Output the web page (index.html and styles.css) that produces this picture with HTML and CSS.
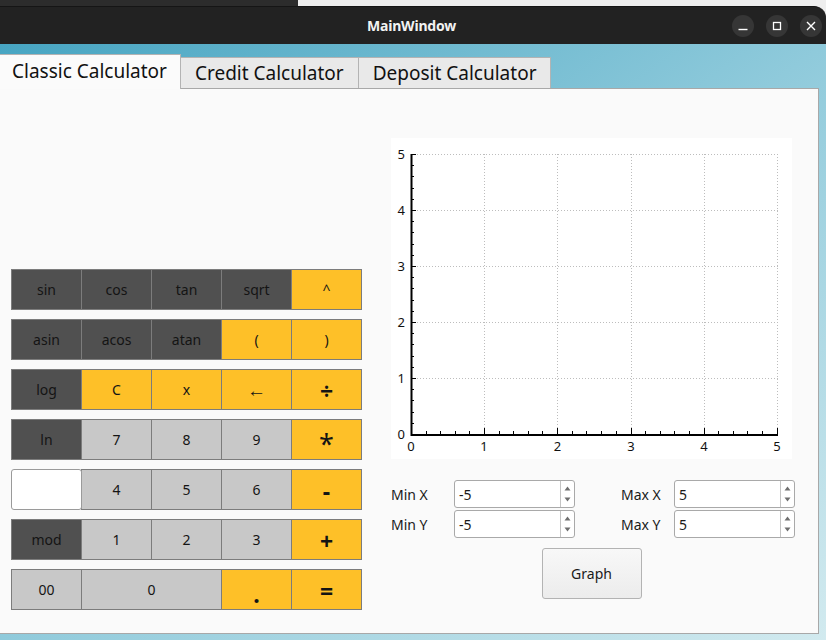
FILE: index.html
```html
<!DOCTYPE html>
<html>
<head>
<meta charset="utf-8">
<link rel="stylesheet" href="styles.css">
</head>
<body>
<div class="screen">
  <div class="topbar">
    <div class="titlebar">
      <span></span>
      <span class="title">MainWindow</span>
      <div class="wm">
        <span class="wm-btn"><svg width="22" height="22" viewBox="0 0 22 22"><path d="M6.5 14.5h9" stroke="#fff" stroke-width="1.4"/></svg></span>
        <span class="wm-btn"><svg width="22" height="22" viewBox="0 0 22 22"><rect x="7.5" y="7.5" width="7" height="7" fill="none" stroke="#fff" stroke-width="1.3"/></svg></span>
        <span class="wm-btn"><svg width="22" height="22" viewBox="0 0 22 22"><path d="M7 7l8 8M15 7l-8 8" stroke="#fff" stroke-width="1.4"/></svg></span>
      </div>
    </div>
  </div>
  <div class="desktop">
    <div class="tabs">
      <div class="tab active">Classic Calculator</div>
      <div class="tab">Credit Calculator</div>
      <div class="tab">Deposit Calculator</div>
    </div>
    <div class="pane">
      <div class="keypad">
        <div class="krow">
          <div class="key dark">sin</div><div class="key dark">cos</div><div class="key dark">tan</div><div class="key dark">sqrt</div><div class="key yellow">^</div>
        </div>
        <div class="krow">
          <div class="key dark">asin</div><div class="key dark">acos</div><div class="key dark">atan</div><div class="key yellow">(</div><div class="key yellow">)</div>
        </div>
        <div class="krow">
          <div class="key dark">log</div><div class="key yellow">C</div><div class="key yellow">x</div><div class="key yellow arrow">←</div><div class="key yellow big">÷</div>
        </div>
        <div class="krow">
          <div class="key dark">ln</div><div class="key light">7</div><div class="key light">8</div><div class="key light">9</div><div class="key yellow big star">*</div>
        </div>
        <div class="krow">
          <div class="key field"></div><div class="key light">4</div><div class="key light">5</div><div class="key light">6</div><div class="key yellow big">-</div>
        </div>
        <div class="krow">
          <div class="key dark">mod</div><div class="key light">1</div><div class="key light">2</div><div class="key light">3</div><div class="key yellow big">+</div>
        </div>
        <div class="krow">
          <div class="key light">00</div><div class="key light wide">0</div><div class="key yellow big dot">.</div><div class="key yellow big">=</div>
        </div>
      </div>
      <div class="side">
        <svg class="plot" width="401" height="321" viewBox="0 0 401 321">
          <rect width="401" height="321" fill="#fff"/>
          <g stroke="#bdbdbd" stroke-width="1" stroke-dasharray="1 2" fill="none">
            <path d="M93.5 16V296M166.5 16V296M240.5 16V296M313.5 16V296M386.5 16V296"/>
            <path d="M20 240.5H387M20 184.5H387M20 128.5H387M20 72.5H387M20 16.5H387"/>
          </g>
          <g stroke="#000" stroke-width="1" fill="none">
            <path d="M20 296.5H25M20 240.5H25M20 184.5H25M20 128.5H25M20 72.5H25M20 16.5H25"/>
            <path d="M20 285.5H23M20 274.5H23M20 262.5H23M20 251.5H23M20 229.5H23M20 218.5H23M20 206.5H23M20 195.5H23M20 173.5H23M20 162.5H23M20 150.5H23M20 139.5H23M20 117.5H23M20 106.5H23M20 94.5H23M20 83.5H23M20 61.5H23M20 50.5H23M20 38.5H23M20 27.5H23"/>
            <path d="M93.5 296V290M166.5 296V290M240.5 296V290M313.5 296V290M386.5 296V290"/>
            <path d="M35.5 296V293M49.5 296V293M64.5 296V293M78.5 296V293M108.5 296V293M122.5 296V293M137.5 296V293M151.5 296V293M181.5 296V293M195.5 296V293M210.5 296V293M225.5 296V293M254.5 296V293M269.5 296V293M283.5 296V293M298.5 296V293M327.5 296V293M342.5 296V293M356.5 296V293M371.5 296V293"/>
          </g>
          <path d="M20.5 16V297H387" stroke="#000" stroke-width="2" fill="none"/>
          <g class="ylab" text-anchor="end">
            <text x="14" y="301">0</text>
            <text x="14" y="245">1</text>
            <text x="14" y="189">2</text>
            <text x="14" y="133">3</text>
            <text x="14" y="77">4</text>
            <text x="14" y="21">5</text>
          </g>
          <g class="xlab" text-anchor="middle">
            <text x="20" y="313">0</text>
            <text x="93" y="313">1</text>
            <text x="166.5" y="313">2</text>
            <text x="240" y="313">3</text>
            <text x="313" y="313">4</text>
            <text x="386" y="313">5</text>
          </g>
        </svg>
        <div class="ranges">
          <span class="rlabel">Min X</span>
          <div class="spin"><span class="val">-5</span><span class="arrows"><svg width="13" height="26" viewBox="0 0 13 26"><path d="M3.5 9.5L6.5 5.5L9.5 9.5Z" fill="#6e6e6e"/><path d="M3.5 16.5L6.5 20.5L9.5 16.5Z" fill="#6e6e6e"/></svg></span></div>
          <span></span>
          <span class="rlabel">Max X</span>
          <div class="spin"><span class="val">5</span><span class="arrows"><svg width="13" height="26" viewBox="0 0 13 26"><path d="M3.5 9.5L6.5 5.5L9.5 9.5Z" fill="#6e6e6e"/><path d="M3.5 16.5L6.5 20.5L9.5 16.5Z" fill="#6e6e6e"/></svg></span></div>
          <span class="rlabel">Min Y</span>
          <div class="spin"><span class="val">-5</span><span class="arrows"><svg width="13" height="26" viewBox="0 0 13 26"><path d="M3.5 9.5L6.5 5.5L9.5 9.5Z" fill="#6e6e6e"/><path d="M3.5 16.5L6.5 20.5L9.5 16.5Z" fill="#6e6e6e"/></svg></span></div>
          <span></span>
          <span class="rlabel">Max Y</span>
          <div class="spin"><span class="val">5</span><span class="arrows"><svg width="13" height="26" viewBox="0 0 13 26"><path d="M3.5 9.5L6.5 5.5L9.5 9.5Z" fill="#6e6e6e"/><path d="M3.5 16.5L6.5 20.5L9.5 16.5Z" fill="#6e6e6e"/></svg></span></div>
        </div>
        <div class="graph-wrap"><div class="graph-btn">Graph</div></div>
      </div>
    </div>
  </div>
</div>
</body>
</html>
```

FILE: styles.css
```css
* { box-sizing: border-box; }
html, body { margin: 0; padding: 0; }
body {
  width: 826px;
  height: 640px;
  overflow: hidden;
  font-family: "Noto Sans", "Open Sans", sans-serif;
  color: #1a1a1a;
}
.screen { width: 826px; height: 640px; display: flex; flex-direction: column; }

.topbar {
  height: 44px;
  padding-top: 6px;
  background: linear-gradient(to right, #2c2c2c 298px, #eeeeee 298px);
}
.titlebar {
  height: 38px;
  background: #222222;
  border-top: 1px solid #151515;
  border-top-right-radius: 12px;
  display: grid;
  grid-template-columns: 1fr auto 1fr;
  align-items: center;
}
.title {
  color: #f2f2f2;
  font-weight: bold;
  font-size: 14px;
  letter-spacing: -0.2px;
  margin-left: -3px;
}
.wm {
  justify-self: end;
  display: flex;
  gap: 12px;
  padding-right: 4px;
}
.wm-btn {
  width: 22px;
  height: 22px;
  border-radius: 50%;
  background: #363636;
  display: flex;
}

.desktop {
  flex: 1;
  background: linear-gradient(to bottom right, #47a5c2 0%, #8fcadb 50%, #d2eaef 100%);
}
.tabs {
  display: flex;
  align-items: flex-end;
  height: 44px;
  padding-top: 10px;
}
.tab {
  height: 31px;
  background: #e9e9e9;
  border: 1px solid #b3b3b3;
  border-bottom: none;
  border-left: none;
  font-size: 19px;
  line-height: 30px;
  padding: 0 14px 0 14px;
  color: #111;
}
.tab.active {
  height: 35px;
  background: #fbfbfb;
  padding: 0 13px 4px 12px;
  line-height: 32px;
  margin-bottom: -1px;
  position: relative;
}

.pane {
  width: 820px;
  height: 546px;
  margin-left: -1px;
  background: #fafafa;
  border: 1px solid #a8a8a8;
  display: flex;
  padding-left: 11px;
}

.keypad {
  margin-top: 180px;
  display: flex;
  flex-direction: column;
  gap: 9px;
  width: 351px;
}
.krow { display: flex; }
.key {
  width: 71px;
  height: 41px;
  border: 1px solid #7c7c7c;
  margin-left: -1px;
  display: flex;
  align-items: center;
  justify-content: center;
  font-size: 14px;
  color: #141414;
}
.key:first-child { margin-left: 0; }
.key.wide { width: 141px; }
.dark { background: #505050; }
.yellow { background: #fec028; }
.light { background: #c8c8c8; }
.field {
  background: #ffffff;
  border-color: #9a9a9a;
  border-radius: 3px;
  position: relative;
  z-index: 0;
}
.key.arrow { font-size: 19px; }
.key.big { font-size: 23px; font-weight: bold; padding-top: 3px; }
.key.star { padding-top: 8px; font-size: 27px; font-weight: normal; }
.key.dot { padding-top: 9px; }

.side {
  margin-left: 29px;
  margin-top: 49px;
  width: 404px;
  display: flex;
  flex-direction: column;
}
.plot { display: block; }
.plot text { font-size: 13px; fill: #111; font-family: "Noto Sans", sans-serif; }

.ranges {
  margin-top: 21px;
  display: grid;
  grid-template-columns: 63px 121px 46px 53px 121px;
  grid-auto-rows: 28px;
  row-gap: 2px;
  align-items: center;
}
.rlabel { font-size: 14px; color: #1a1a1a; }
.spin {
  height: 28px;
  background: #fff;
  border: 1px solid #a9a9a9;
  border-radius: 3px;
  display: flex;
  align-items: center;
}
.spin .val { flex: 1; padding-left: 4px; font-size: 14px; }
.spin .arrows {
  width: 14px;
  height: 26px;
  border-left: 1px solid #c4c4c4;
  display: flex;
}
.graph-wrap {
  margin-top: 10px;
  width: 401px;
  display: flex;
  justify-content: center;
}
.graph-btn {
  width: 100px;
  height: 51px;
  border: 1px solid #b3b3b3;
  border-radius: 3px;
  background: linear-gradient(#f8f8f8, #ececec);
  display: flex;
  align-items: center;
  justify-content: center;
  font-size: 14px;
  color: #1a1a1a;
}
```
